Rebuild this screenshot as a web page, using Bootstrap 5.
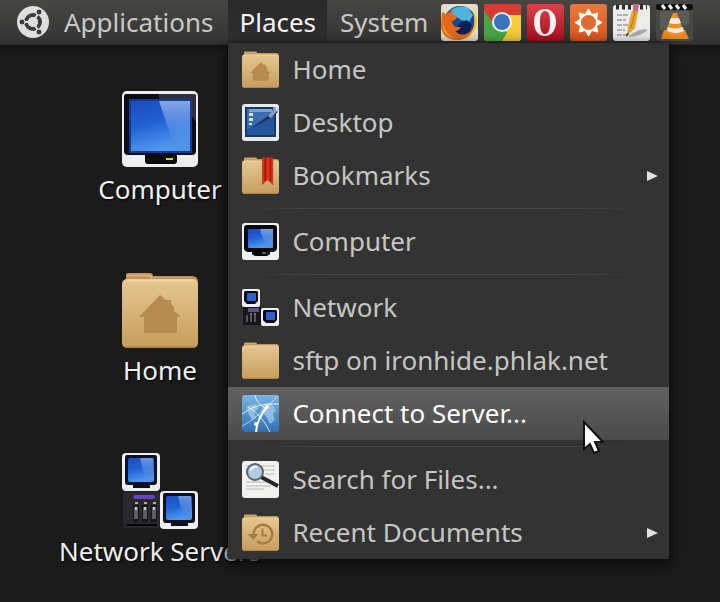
<!DOCTYPE html>
<html lang="en">
<head>
<meta charset="utf-8">
<meta name="viewport" content="width=device-width, initial-scale=1">
<title>Places</title>
<link href="https://cdn.jsdelivr.net/npm/bootstrap@5.3.0/dist/css/bootstrap.min.css" rel="stylesheet">
<style>
body { background: #1b1b1b; font-family: "Noto Sans", "Open Sans", sans-serif; color: #f0f0ec; min-height: 100vh; overflow-x: hidden; }
.panel { background: linear-gradient(#464644, #343434); height: 44px; box-shadow: 0 1px 0 #2a2a2a, 0 2px 6px #0c0c0c; position: relative; z-index: 5; }
.panel-btn { border: 0; background: transparent; color: #c9c9c5; font-size: 26px; line-height: 42px; height: 44px; padding: 0 13px; white-space: nowrap; }
.panel-main { padding: 0 15px 0 17px; gap: 15px; }
.panel-open { color: #f5f5f2; background: linear-gradient(#292929, #303030); padding: 0 11px; }
.launchers { gap: 6px; }
.launcher { border: 0; background: transparent; padding: 0; line-height: 0; }
.launcher svg, .places-item .pic { width: 37px; height: 37px; }
.places-menu { top: 43px; left: 0; width: 441px; padding: 0; margin: 0; border: 0; border-radius: 0; background: #333; box-shadow: 0 4px 14px #080808, 0 0 2px #111; }
.places-item { display: flex; align-items: center; gap: 13px; height: 53px; padding: 0 10px 0 14px; font-size: 26px; color: #c6c6c2; }
.places-item:hover, .places-item:focus { color: #fff; background: #555; }
.places-item.active { background: linear-gradient(#616161, #4b4b4b); color: #fff; }
.places-rule { height: 1px; margin: 6px 32px 6px 22px; border: 0; opacity: 1; background: linear-gradient(90deg, #333, #484848 20%, #484848 80%, #333); }
.desk { padding: 47px 0 0 60px; gap: 73px; }
.desk-item { width: 200px; color: #f0f0ec; font-size: 26px; white-space: nowrap; text-decoration: none; gap: 4px; text-shadow: 1px 1px 2px #000; }
.desk-item:hover { color: #fff; }
.desk-item svg { width: 76px; height: 76px; }
.desk-item .cap { height: 28px; line-height: 37px; }
.pointer { position: absolute; left: 582px; top: 420px; z-index: 20; pointer-events: none; }
</style>
<script src="https://cdn.jsdelivr.net/npm/bootstrap@5.3.0/dist/js/bootstrap.bundle.min.js"></script>
</head>
<body>
<svg width="0" height="0" class="position-absolute" aria-hidden="true">
  <defs>
    <linearGradient id="gTan" x1="0" y1="0" x2="0" y2="1"><stop offset="0" stop-color="#e6c792"/><stop offset="1" stop-color="#c69d5c"/></linearGradient>
    <linearGradient id="gBlue" x1="0" y1="0" x2="0.3" y2="1"><stop offset="0" stop-color="#1c4dbd"/><stop offset=".5" stop-color="#2260d4"/><stop offset="1" stop-color="#4c98ee"/></linearGradient>
    <linearGradient id="gShine" x1="0" y1="0" x2="0" y2="1"><stop offset="0" stop-color="#a9c3ee"/><stop offset="1" stop-color="#3f7fe0" stop-opacity="0.300"/></linearGradient>
    <linearGradient id="gSky" x1="0" y1="0" x2="0" y2="1"><stop offset="0" stop-color="#7ab4e2"/><stop offset="1" stop-color="#2d71b4"/></linearGradient>
    <linearGradient id="gRed" x1="0" y1="0" x2="0" y2="1"><stop offset="0" stop-color="#d8434b"/><stop offset="1" stop-color="#a80f1b"/></linearGradient>
    <linearGradient id="gOrange" x1="0" y1="0" x2="0" y2="1"><stop offset="0" stop-color="#ea7a3c"/><stop offset="1" stop-color="#d8541c"/></linearGradient>
    <clipPath id="tile"><rect x="0" y="0" width="37" height="37" rx="3"/></clipPath>
  </defs>
  <symbol id="folder" viewBox="0 0 76 76">
    <path d="M4 12V3q0-2 3-2h21q3 0 3 3h39q6 0 6 6v10H1z" fill="#c0975a"/>
    <path d="M5 3.500h23l2 3" fill="none" stroke="#dab982" stroke-width="1.500"/>
    <rect x="0" y="7" width="76" height="69" rx="5" fill="url(#gTan)"/>
    <path d="M4 8.500h68" stroke="#f1d9ab" stroke-width="1.500"/>
    <path d="M3 75h70" stroke="#a57c40" stroke-width="1.500"/>
  </symbol>
  <symbol id="folderHome" viewBox="0 0 76 76">
    <use href="#folder"/>
    <path d="M38 23l6 5h5v4l3 3v4l7 6h-4v16H22V45h-5z" fill="#b78b4e"/>
  </symbol>
  <symbol id="monitor" viewBox="0 0 76 76">
    <rect width="76" height="76" rx="5" fill="#eeeef0"/>
    <path d="M4 3h68q2 0 2 3v54q0 4-4 4H55v6q0 3-3 3H26q-3 0-3-3v-6H6q-4 0-4-4V6q0-3 2-3z" fill="#0b0c12"/>
    <path d="M36 3h36q2 0 2 3v25L60 10H38z" fill="#30323a"/>
    <rect x="7" y="8" width="63" height="54" fill="#123b94"/>
    <rect x="9" y="10" width="59" height="50" fill="url(#gBlue)"/>
    <path d="M37 10h31v50H54z" fill="url(#gShine)" opacity=".75"/>
    <rect x="44" y="67" width="7" height="2" fill="#c5d45a"/>
  </symbol>
  <symbol id="miniMonitor" viewBox="0 0 38 38">
    <rect width="38" height="38" rx="4" fill="#eeeef0"/>
    <path d="M5 2h28q2 0 2 2v25q0 3-3 3h-4v3H11v-3H6q-3 0-3-3V4q0-2 2-2z" fill="#0d1020"/>
    <rect x="6" y="5" width="26" height="24" rx="2" fill="url(#gBlue)"/>
    <path d="M18 5h13v23h-7z" fill="url(#gShine)" opacity=".6"/>
  </symbol>
  <symbol id="network" viewBox="0 0 76 76">
    <rect x="1" y="39" width="37" height="36" rx="2" fill="#292831"/>
    <rect x="11" y="42" width="22" height="4" rx="2" fill="#6544c0"/>
    <g fill="#15151a"><rect x="11" y="52" width="6" height="17"/><rect x="20" y="52" width="6" height="17"/><rect x="29" y="52" width="6" height="17"/></g>
    <g fill="#b4b36a"><rect x="13" y="49" width="3" height="2"/><rect x="22" y="49" width="3" height="2"/><rect x="31" y="49" width="3" height="2"/></g>
    <g fill="#5b5c66"><rect x="12" y="54" width="4" height="12"/><rect x="21" y="54" width="4" height="12"/><rect x="30" y="54" width="4" height="12"/></g>
    <g fill="#c9c9c9"><rect x="13" y="54" width="2" height="3"/><rect x="22" y="54" width="2" height="3"/><rect x="31" y="54" width="2" height="3"/></g>
    <path d="M5 72h30" stroke="#000" stroke-width="2"/>
    <use href="#miniMonitor" x="0" y="0" width="38" height="38"/>
    <use href="#miniMonitor" x="38" y="38" width="38" height="38"/>
  </symbol>
  <symbol id="miniNetwork" viewBox="0 0 37 37">
    <rect x="1" y="18" width="18" height="18" fill="#17171b"/><rect x="6" y="19" width="11" height="4" fill="#6b4a8e"/>
    <path d="M5 26v7M9 26v7M13 26v7" stroke="#55565c" stroke-width="2"/><path d="M8 25h2M12 25h2" stroke="#d8d8c8"/>
    <rect width="18" height="18" rx="2" fill="#f0f0f0"/><path d="M3 2h12l1 1v9l-3 3H5l-3-3V3z" fill="#070a18"/><rect x="5" y="4" width="9" height="8" rx="1" fill="#2c61cf"/>
    <rect x="19" y="19" width="18" height="18" rx="2" fill="#f0f0f0"/><path d="M22 21h12l1 1v9l-3 3h-8l-3-3v-9z" fill="#070a18"/><rect x="24" y="23" width="9" height="8" rx="1" fill="#2c61cf"/>
  </symbol>
</svg>

<nav class="panel d-flex align-items-center" aria-label="Main panel">
  <button type="button" class="panel-btn panel-main d-flex align-items-center">
    <svg width="32" height="32" viewBox="0 0 32 32" aria-hidden="true">
      <circle cx="16" cy="16" r="16" fill="#dededc"/>
      <circle cx="16" cy="16" r="7" fill="none" stroke="#3c3c3c" stroke-width="4"/>
      <path d="M16 16H5M16 16l6-10M16 16l6 10" stroke="#dededc" stroke-width="2"/>
      <circle cx="16" cy="16" r="5" fill="#dededc"/>
      <g fill="#3c3c3c" stroke="#dededc"><circle cx="5" cy="16" r="3"/><circle cx="22" cy="6" r="3"/><circle cx="22" cy="26" r="3"/></g>
    </svg>
    Applications
  </button>
  <div class="position-relative">
    <button type="button" class="panel-btn panel-open" aria-expanded="true" aria-haspopup="true">Places</button>
    <div class="dropdown-menu places-menu show">
      <a class="dropdown-item places-item" href="#home"><svg class="pic" aria-hidden="true"><use href="#folderHome"/></svg>Home</a>
      <a class="dropdown-item places-item" href="#desktop">
        <svg class="pic" viewBox="0 0 37 37" aria-hidden="true">
          <rect width="37" height="37" rx="3" fill="#e6e9ee"/><rect x="3" y="3" width="31" height="30" fill="#16386e"/><rect x="5" y="5" width="27" height="26" fill="#3c6cb0"/>
          <path d="M5 25l27-15v21H5z" fill="#2456a0"/><path d="M7 5h23v3H7z" fill="#7da3d4"/>
          <g fill="#d7e5f8"><rect x="7" y="9" width="4" height="3"/><rect x="7" y="14" width="4" height="3"/><rect x="7" y="19" width="3" height="2"/></g>
          <path d="M10 24L26 12l7-7 3 3-8 6z" fill="#1b2c4c"/><path d="M26 12l8-9 3 2-8 9z" fill="#8b9db8"/><path d="M31 4h4v3" stroke="#fff" fill="none"/>
        </svg>Desktop</a>
      <a class="dropdown-item places-item" href="#bookmarks">
        <svg class="pic" viewBox="0 0 76 76" aria-hidden="true"><use href="#folder"/><path d="M41 1h23v57L52 47 41 58z" fill="#d8301a"/><path d="M46 1h4v46l-4 4zM57 1h3v50l-3-3z" fill="#9e1a0e"/></svg>
        <span class="flex-grow-1">Bookmarks</span>
        <svg width="13" height="12" viewBox="0 0 13 12" aria-hidden="true"><path d="M1 1l11 5-11 5z" fill="#e2e2e0"/></svg></a>
      <hr class="places-rule">
      <a class="dropdown-item places-item" href="#computer"><svg class="pic" viewBox="0 0 37 37" aria-hidden="true">
        <rect width="37" height="37" rx="3" fill="#f0f0f0"/><path d="M5 2h27q3 0 3 3v20q0 3-4 4h-3v2l-3 2H13l-3-2v-2H6q-4-1-4-4V5q0-3 3-3z" fill="#07080c"/>
        <rect x="6" y="6" width="25" height="19" rx="1" fill="url(#gBlue)"/><path d="M18 6h13v19h-7z" fill="url(#gShine)" opacity=".7"/><path d="M20 30h4" stroke="#b9c84c"/></svg>Computer</a>
      <hr class="places-rule">
      <a class="dropdown-item places-item" href="#network"><svg class="pic" aria-hidden="true"><use href="#miniNetwork"/></svg>Network</a>
      <a class="dropdown-item places-item" href="#sftp"><svg class="pic" aria-hidden="true"><use href="#folder"/></svg>sftp on ironhide.phlak.net</a>
      <a class="dropdown-item places-item active" href="#connect">
        <svg class="pic" viewBox="0 0 37 37" aria-hidden="true">
          <g clip-path="url(#tile)"><rect width="37" height="37" fill="url(#gSky)"/>
          <path d="M5 11l8-2 4 4-5 4 2 6-4 2-4-7zM22 9l7-1 5 7-3 4 2 6-5 4-4-8-5-4z" fill="#a9cdea" opacity=".7"/>
          <g fill="none" stroke="#fff"><path d="M0 19Q15 7 37 9" opacity=".8"/><path d="M13 0q1 8 10 13" opacity=".8"/><path d="M14 37q1-14 12-26" stroke-width="2"/><path d="M6 12q14 8 22 25" opacity=".8"/><path d="M0 31q12-6 26-20L37 0" opacity=".6"/></g></g>
          <circle cx="14" cy="29" r="2" fill="#fff"/><circle cx="25" cy="12" r="2" fill="#fff"/>
        </svg>Connect to Server...</a>
      <hr class="places-rule">
      <a class="dropdown-item places-item" href="#search">
        <svg class="pic" viewBox="0 0 37 37" aria-hidden="true">
          <rect width="37" height="37" rx="3" fill="#f1f1f0"/><path d="M4 5h29M22 9h11M23 13h10M4 21h22M4 25h25M4 28h18" stroke="#b9b9b9"/>
          <path d="M19 16l17 9" stroke="#25272b" stroke-width="4"/><circle cx="13" cy="11" r="8" fill="#b3cde0" stroke="#596672" stroke-width="2"/><path d="M8 10q2-5 7-4" stroke="#eff7fd" stroke-width="2" fill="none"/>
        </svg>Search for Files...</a>
      <a class="dropdown-item places-item" href="#recent">
        <svg class="pic" viewBox="0 0 76 76" aria-hidden="true"><use href="#folder"/><g fill="none" stroke="#a67b40" stroke-width="5"><path d="M24 41a19 19 0 1 1 7 15"/><path d="M42 30v14h9" stroke-width="4"/></g><path d="M12 41h22L23 53z" fill="#a67b40"/></svg>
        <span class="flex-grow-1">Recent Documents</span>
        <svg width="13" height="12" viewBox="0 0 13 12" aria-hidden="true"><path d="M1 1l11 5-11 5z" fill="#e2e2e0"/></svg></a>
    </div>
  </div>
  <button type="button" class="panel-btn">System</button>
  <div class="launchers d-flex">
    <button type="button" class="launcher" aria-label="Firefox"><svg viewBox="0 0 37 37" aria-hidden="true"><g clip-path="url(#tile)">
      <rect width="37" height="37" fill="#e6dccb"/><circle cx="19" cy="18" r="16" fill="#174a8c"/>
      <path d="M10 6q8-6 17-2l5 7-4 7-8-2-6-4-5 2z" fill="#50b4dc"/><path d="M18 19l8-3 5 5-3 8-8 3-5-4z" fill="#0c1f56"/>
      <path d="M1 8q3 1 4 3 3-4 8-4l-2 4q3 0 5 2-1 3-5 4 0 4 4 6l5 0q-2 4-6 4 5 5 11 3 6-2 8-9-1 13-14 15Q0 37 0 20z" fill="#e2691c"/>
      <path d="M31 5q6 6 5 15-2 11-12 15 8-5 9-14 1-9-2-16z" fill="#f4c63a"/><path d="M2 13q-1 9 4 15 4 5 9 6Q4 34 2 24z" fill="#ef9b2e"/></g></svg></button>
    <button type="button" class="launcher" aria-label="Chrome"><svg viewBox="0 0 37 37" aria-hidden="true"><g clip-path="url(#tile)">
      <rect width="37" height="37" fill="#f5c82e"/><path d="M0 0h37v11H18L8 22 0 7z" fill="#d63c30"/><path d="M0 6l11 16 7 5 6 1-6 9H0z" fill="#4aa547"/><path d="M26 24l-8 13h19V11H22z" fill="#f5cc35"/></g>
      <circle cx="18" cy="18" r="10" fill="#f1f1ee"/><circle cx="18" cy="18" r="8" fill="#3974bd"/></svg></button>
    <button type="button" class="launcher" aria-label="Opera"><svg viewBox="0 0 37 37" aria-hidden="true">
      <rect width="37" height="37" rx="3" fill="url(#gRed)"/><path fill-rule="evenodd" d="M18 5c7 0 11 6 11 13S25 32 18 32 7 26 7 18 11 5 18 5zm0 2c-4 0-5 5-5 11s1 12 5 12 5-5 5-12-1-11-5-11z" fill="#f7f1f0"/></svg></button>
    <button type="button" class="launcher" aria-label="Settings"><svg viewBox="0 0 37 37" aria-hidden="true">
      <rect width="37" height="37" rx="3" fill="url(#gOrange)"/>
      <path id="ray" d="M15 10l3-5h1l3 5z" fill="#fff"/><g fill="#fff"><use href="#ray" transform="rotate(45 18.500 18.500)"/><use href="#ray" transform="rotate(90 18.500 18.500)"/><use href="#ray" transform="rotate(135 18.500 18.500)"/><use href="#ray" transform="rotate(180 18.500 18.500)"/><use href="#ray" transform="rotate(225 18.500 18.500)"/><use href="#ray" transform="rotate(270 18.500 18.500)"/><use href="#ray" transform="rotate(315 18.500 18.500)"/></g>
      <circle cx="18.500" cy="18.500" r="8.500" fill="#e06a30" stroke="#fff" stroke-width="2"/></svg></button>
    <button type="button" class="launcher" aria-label="Text editor"><svg viewBox="0 0 37 37" aria-hidden="true">
      <rect y="1" width="37" height="36" rx="3" fill="#ececea"/><path d="M3 3h31" stroke="#2b2b2b" stroke-width="5" stroke-dasharray="3 3"/>
      <path d="M4 11h11M4 16h9M4 21h11M4 26h8M4 31h10" stroke="#77777b" stroke-dasharray="5 1"/><path d="M15 33q12-10 20-7-9 7-20 7z" fill="#aaa"/>
      <path d="M19 7l6 1-3 16-8 8 1-10z" fill="#e8a42b"/><path d="M20 7l2 1-4 16" stroke="#b97618" fill="none"/><path d="M20 0h6l-1 8-5-1z" fill="#c46a7d"/><path d="M14 29l2 1-3 3z" fill="#222"/></svg></button>
    <button type="button" class="launcher" aria-label="VLC"><svg viewBox="0 0 37 37" aria-hidden="true">
      <rect y="1" width="37" height="36" rx="3" fill="#484845"/><rect width="37" height="6" rx="2" fill="#111"/><path d="M6 1l3 4M13 1l3 4M20 1l3 4M27 1l3 4" stroke="#eee" stroke-width="3"/>
      <path d="M4 7h29v13L4 26z" fill="#6c6c68" opacity=".5"/><path d="M5 35l3-9h21l4 9z" fill="#e9861c"/><path d="M17 9h4l7 20q-9 5-19 0z" fill="#f0901f"/><path d="M15 14h8l2 5q-6 2-12 0zM12 23q7 3 15 0l1 4q-8 4-17 0z" fill="#efece6"/></svg></button>
  </div>
</nav>

<main class="desk d-flex flex-column align-items-start">
  <a class="desk-item d-flex flex-column align-items-center" href="#computer"><svg aria-hidden="true"><use href="#monitor"/></svg><span class="cap">Computer</span></a>
  <a class="desk-item d-flex flex-column align-items-center" href="#home"><svg aria-hidden="true"><use href="#folderHome"/></svg><span class="cap">Home</span></a>
  <a class="desk-item d-flex flex-column align-items-center" href="#servers"><svg aria-hidden="true"><use href="#network"/></svg><span class="cap">Network Servers</span></a>
</main>

<svg class="pointer" width="22" height="36" viewBox="0 0 22 36" aria-hidden="true"><path d="M2 2v27l6-5 4 9 5-2-4-9h8z" fill="#fff" stroke="#111" stroke-width="2"/></svg>
</body>
</html>
